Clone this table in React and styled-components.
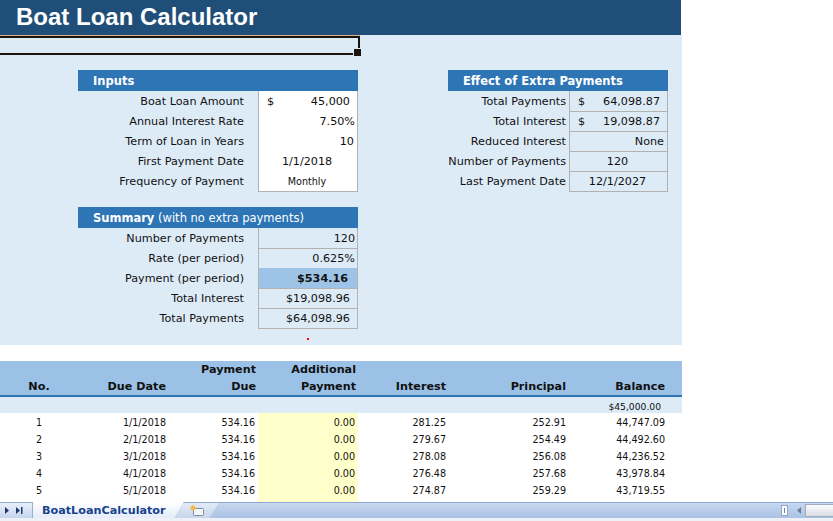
import React from 'react';
import styled, { createGlobalStyle } from 'styled-components';

const Global = createGlobalStyle`
  html, body { margin:0; padding:0; background:#fff; }
  body { font-family:"DejaVu Sans", Verdana, sans-serif; color:#111; }
  * { box-sizing:border-box; }
`;

const Screen = styled.div`
  width:833px;
  height:521px;
  overflow:hidden;
  display:flex;
  flex-direction:column;
  background:#fff;
`;

const Sheet = styled.div`
  flex:1;
  width:682px;
  display:flex;
  flex-direction:column;
  overflow:hidden;
  & > * { flex-shrink:0; }
`;

const TitleBar = styled.div`
  height:35px;
  width:681px;
  background:#1f4e78;
  color:#fff;
  font:bold 24px "Liberation Sans", Arial, sans-serif;
  line-height:28px;
  padding:3px 0 0 16px;
`;

const Band = styled.div`
  position:relative;
  height:310px;
  background:#ddebf7;
  display:flex;
  align-items:flex-start;
  padding-top:35px;
`;

// the selected cell range in the top left corner
const Selection = styled.div`
  position:absolute;
  left:-4px;
  top:1px;
  width:364px;
  height:19px;
  border:2px solid #1b140d;
  box-shadow:0 -1px 0 #d9b38c;
  &::after {
    content:'';
    position:absolute;
    right:-4px;
    bottom:-4px;
    width:7px;
    height:7px;
    background:#1b140d;
    border:1px solid #ddebf7;
  }
`;

const Panel = styled.div`
  margin-left:${p => p.$left}px;
  width:${p => p.$width}px;
  display:flex;
  flex-direction:column;
`;

const Stack = styled.div`
  display:flex;
  flex-direction:column;
  gap:16px;
`;

const SectionHead = styled.div`
  height:21px;
  background:#2e75b6;
  color:#fff;
  font-size:11.5px;
  line-height:21px;
  padding:1px 0 0 15px;
  white-space:nowrap;
  b { font-weight:bold; }
`;

const Row = styled.div`
  display:grid;
  grid-template-columns:${p => p.$cols};
  height:20px;
`;

const Label = styled.div`
  font-size:11.2px;
  line-height:20px;
  padding-top:1px;
  text-align:right;
  padding-right:${p => p.$pad}px;
  white-space:nowrap;
`;

const Value = styled.div`
  display:flex;
  align-items:center;
  justify-content:${p => p.$align || 'flex-end'};
  background:${p => p.$bg || 'transparent'};
  border:1px solid #b2b2b2;
  border-top:none;
  font-size:${p => p.$size || 11.2}px;
  font-weight:${p => (p.$bold ? 'bold' : 'normal')};
  padding:1px ${p => (p.$padR === undefined ? 2 : p.$padR)}px 0 ${p => p.$padL || 0}px;
  white-space:nowrap;
`;

const Spacer = styled.div`
  height:16px;
  background:#fff;
  position:relative;
`;

const RedDot = styled.div`
  position:absolute;
  left:307px;
  top:-7px;
  width:2px;
  height:2px;
  background:#ff0000;
`;

const COLS = '78px 92px 88px 100px 92px 119px 99px 14px';

const TableHead = styled.div`
  display:grid;
  grid-template-columns:${COLS};
  height:36px;
  background:#9bc2e6;
  border-bottom:2px solid #2e75b6;
`;

const HeadCell = styled.div`
  align-self:end;
  font-size:11.2px;
  font-weight:bold;
  line-height:17px;
  text-align:${p => (p.$center ? 'center' : 'right')};
  padding-right:${p => (p.$center ? 0 : p.$pad || 3)}px;
  white-space:nowrap;
`;

const BalanceRow = styled.div`
  display:grid;
  grid-template-columns:${COLS};
  height:16px;
  background:#ddebf7;
`;

const DataRow = styled.div`
  display:grid;
  grid-template-columns:${COLS};
  height:${p => p.$h || 17}px;
`;

const Cell = styled.div`
  font-size:${p => p.$size || 9.6}px;
  line-height:15px;
  padding-top:2px;
  text-align:${p => (p.$center ? 'center' : 'right')};
  padding-right:${p => (p.$center ? 0 : p.$pad || 3)}px;
  background:${p => p.$bg || 'transparent'};
  white-space:nowrap;
`;

const TabBar = styled.div`
  height:19px;
  flex-shrink:0;
  display:flex;
  align-items:stretch;
  background:linear-gradient(#c7d8ef, #a9c1e4);
  border-top:1px solid #8eaad3;
  border-bottom:3px solid #eef2f8;
`;

const NavBox = styled.div`
  width:33px;
  display:flex;
  align-items:center;
  gap:7px;
  padding-left:5px;
  background:linear-gradient(#e8eff9, #c6d6ee);
  border-right:1px solid #9aaed0;
`;

const SheetTab = styled.div`
  margin-top:-1px;
  padding:0 18px 0 9px;
  background:linear-gradient(#ffffff, #e4ecf8);
  color:#15428b;
  font-size:11.2px;
  font-weight:bold;
  line-height:17px;
  clip-path:polygon(0 0, 100% 0, calc(100% - 9px) 100%, 0 100%);
`;

const NewTab = styled.div`
  width:44px;
  margin-left:-9px;
  display:flex;
  align-items:center;
  justify-content:center;
  background:linear-gradient(#e4ecf7, #c5d5ec);
  clip-path:polygon(9px 0, 100% 0, calc(100% - 9px) 100%, 0 100%);
`;

const Filler = styled.div`
  flex:1;
`;

const SplitBox = styled.div`
  width:7px;
  margin:2px 5px 2px 0;
  background:#fff;
  border:1px solid #8ea6cc;
  display:flex;
  justify-content:center;
  &::after { content:''; width:1px; background:#6d7f9c; margin:2px 0; }
`;

const ArrowBox = styled.div`
  width:12px;
  display:flex;
  align-items:center;
  justify-content:center;
`;

const Thumb = styled.div`
  width:28px;
  margin:1px 0;
  background:linear-gradient(#fafbfc, #d9dde3);
  border:1px solid #a0acbd;
  border-right:none;
`;

const Tri = ({ flip, bar }) => (
  <svg width={bar ? 7 : 4} height="7" viewBox={bar ? '0 0 7 7' : '0 0 4 7'}>
    <polygon points={flip ? '4,0 0,3.5 4,7' : '0,0 4,3.5 0,7'} fill={flip ? '#6b7c96' : '#1f3a6e'} />
    {bar && <rect x="5" y="0" width="1.5" height="7" fill="#1f3a6e" />}
  </svg>
);

const NewSheetIcon = () => (
  <svg width="16" height="13" viewBox="0 0 16 13">
    <rect x="4.5" y="4.5" width="10" height="7" rx="1" fill="#f4f6fa" stroke="#7d8aa0" />
    <circle cx="4" cy="4" r="2" fill="#f6a21a" />
    <path d="M4 0.5v7M0.5 4h7M1.6 1.6l4.8 4.8M6.4 1.6l-4.8 4.8" stroke="#f2c14a" strokeWidth="0.8" />
  </svg>
);

const inputs = [
  ['Boat Loan Amount', '45,000', { dollar: true, padR: 7 }],
  ['Annual Interest Rate', '7.50%', {}],
  ['Term of Loan in Years', '10', { padR: 3 }],
  ['First Payment Date', '1/1/2018', { align: 'center' }],
  ['Frequency of Payment', 'Monthly', { align: 'center', size: 9.6 }],
];

const summary = [
  ['Number of Payments', '120', {}],
  ['Rate (per period)', '0.625%', {}],
  ['Payment (per period)', '$534.16', { bold: true, bg: '#9dc3e6', padR: 9 }],
  ['Total Interest', '$19,098.96', { padR: 7 }],
  ['Total Payments', '$64,098.96', { padR: 7 }],
];

const effect = [
  ['Total Payments', '64,098.87', { dollar: true, padR: 7 }],
  ['Total Interest', '19,098.87', { dollar: true, padR: 7 }],
  ['Reduced Interest', 'None', { padR: 3 }],
  ['Number of Payments', '120', { align: 'center' }],
  ['Last Payment Date', '12/1/2027', { align: 'center' }],
];

const schedule = [
  ['1', '1/1/2018', '534.16', '0.00', '281.25', '252.91', '44,747.09'],
  ['2', '2/1/2018', '534.16', '0.00', '279.67', '254.49', '44,492.60'],
  ['3', '3/1/2018', '534.16', '0.00', '278.08', '256.08', '44,236.52'],
  ['4', '4/1/2018', '534.16', '0.00', '276.48', '257.68', '43,978.84'],
  ['5', '5/1/2018', '534.16', '0.00', '274.87', '259.29', '43,719.55'],
];

const renderRows = (rows, cols, labelPad, bg) =>
  rows.map(([label, value, o]) => (
    <Row key={label} $cols={cols}>
      <Label $pad={labelPad}>{label}</Label>
      <Value
        $bg={o.bg || bg}
        $bold={o.bold}
        $size={o.size}
        $padR={o.padR}
        $padL={o.dollar ? 8 : 0}
        $align={o.dollar ? 'space-between' : o.align}
      >
        {o.dollar && <span>$</span>}
        <span>{value}</span>
      </Value>
    </Row>
  ));

export default function App() {
  return (
    <Screen>
      <Global />
      <Sheet>
        <TitleBar>Boat Loan Calculator</TitleBar>
        <Band>
          <Selection />
          <Panel $left={78} $width={280}>
            <Stack>
              <div>
                <SectionHead><b>Inputs</b></SectionHead>
                {renderRows(inputs, '180px 100px', 14, '#ffffff')}
              </div>
              <div>
                <SectionHead><b>Summary</b> (with no extra payments)</SectionHead>
                {renderRows(summary, '180px 100px', 14)}
              </div>
            </Stack>
          </Panel>
          <Panel $left={90} $width={220}>
            <SectionHead><b>Effect of Extra Payments</b></SectionHead>
            {renderRows(effect, '121px 99px', 3)}
          </Panel>
        </Band>
        <Spacer><RedDot /></Spacer>
        <TableHead>
          <HeadCell $center>No.</HeadCell>
          <HeadCell $pad={4}>Due Date</HeadCell>
          <HeadCell $pad={2}>Payment<br />Due</HeadCell>
          <HeadCell $pad={2}>Additional<br />Payment</HeadCell>
          <HeadCell $pad={4}>Interest</HeadCell>
          <HeadCell>Principal</HeadCell>
          <HeadCell>Balance</HeadCell>
          <div />
        </TableHead>
        <BalanceRow>
          <div /><div /><div /><div /><div /><div />
          <Cell $pad={7} $size={9.2}>$45,000.00</Cell>
          <div />
        </BalanceRow>
        {schedule.map(r => (
          <DataRow key={r[0]}>
            <Cell $center>{r[0]}</Cell>
            <Cell $pad={4}>{r[1]}</Cell>
            <Cell $pad={3}>{r[2]}</Cell>
            <Cell $pad={3} $bg="#ffffcc">{r[3]}</Cell>
            <Cell $pad={4}>{r[4]}</Cell>
            <Cell $pad={3}>{r[5]}</Cell>
            <Cell $pad={3}>{r[6]}</Cell>
            <div />
          </DataRow>
        ))}
        <DataRow $h={6}>
          <div /><div /><div />
          <Cell $bg="#ffffcc" />
        </DataRow>
      </Sheet>
      <TabBar>
        <NavBox>
          <Tri />
          <Tri bar />
        </NavBox>
        <SheetTab>BoatLoanCalculator</SheetTab>
        <NewTab><NewSheetIcon /></NewTab>
        <Filler />
        <SplitBox />
        <ArrowBox><Tri flip /></ArrowBox>
        <Thumb />
      </TabBar>
    </Screen>
  );
}
